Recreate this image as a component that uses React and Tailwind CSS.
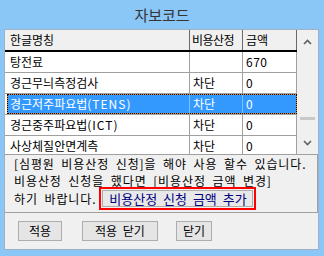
const rows = [
  { name: "탕전료", flag: "", amount: "670" },
  { name: "경근무늬측정검사", flag: "차단", amount: "0" },
  { name: "경근저주파요법(TENS)", flag: "차단", amount: "0", selected: true },
  { name: "경근중주파요법(ICT)", flag: "차단", amount: "0" },
  { name: "사상체질안면계측", flag: "차단", amount: "0" },
];

function Chevron({ down }) {
  return (
    <svg width="9" height="6" viewBox="0 0 9 6" className="block">
      <path
        d={down ? "M1 1 L4.5 4.5 L8 1" : "M1 5 L4.5 1.5 L8 5"}
        fill="none"
        stroke="#606060"
        strokeWidth="1.6"
      />
    </svg>
  );
}

function Name({ text }) {
  // latin part is wider in the original font
  const m = text.match(/^(.*?)(\(.*\))?$/);
  return (
    <>
      {m[1]}
      {m[2] && <span className="tracking-[1px]">{m[2]}</span>}
    </>
  );
}

export default function App() {
  return (
    <div className="w-[324px] h-[256px] overflow-hidden bg-[#8ac6f6] font-['Noto_Sans_CJK_KR',sans-serif] text-black">
      {/* Title */}
      <div className="h-[29px] flex items-center justify-center text-[15px] text-[#343434] pt-px">
        자보코드
      </div>

      <div className="ml-[4px] w-[315px] h-[221px] border border-[#9fb2c4] bg-[#f0f0f0] flex flex-col">
        {/* Grid */}
        <div className="h-[125px] flex bg-white overflow-hidden border-b border-[#a0a0a0]">
          <div className="w-[292px] flex flex-col text-[12px] leading-none">
            {/* Header */}
            <div className="h-[22px] flex shrink-0 bg-[#f0f0f0] border-b-2 border-black">
              <div className="w-[185px] pl-[5px] flex items-center border-r border-[#6a6a6a]">한글명칭</div>
              <div className="w-[53px] pl-[2px] flex items-center border-r border-[#6a6a6a] tracking-[-0.5px]">비용산정</div>
              <div className="w-[54px] pl-[3px] flex items-center border-r border-[#6a6a6a]">금액</div>
            </div>
            {rows.map((r) =>
              r.selected ? (
                <div
                  key={r.name}
                  className="h-[21px] shrink-0 flex pl-[2px] border-b border-[#a0a0a0]"
                >
                  <div className="flex-1 flex bg-[#3399ff] text-white border border-[#e8922e] outline outline-1 outline-dotted outline-black -outline-offset-1">
                    <div className="w-[182px] pl-[2px] flex items-center border-r border-[#80bfff]">
                      <Name text={r.name} />
                    </div>
                    <div className="w-[53px] pl-[3px] flex items-center border-r border-[#80bfff]">{r.flag}</div>
                    <div className="flex-1 pl-[3px] flex items-center">{r.amount}</div>
                  </div>
                </div>
              ) : (
                <div key={r.name} className="h-[21px] shrink-0 flex border-b border-[#a0a0a0]">
                  <div className="w-[185px] pl-[5px] flex items-center border-r border-[#a0a0a0]">
                    <Name text={r.name} />
                  </div>
                  <div className="w-[53px] pl-[3px] flex items-center border-r border-[#a0a0a0]">{r.flag}</div>
                  <div className="w-[54px] pl-[3px] flex items-center border-r border-[#a0a0a0] tracking-[0.5px]">{r.amount}</div>
                </div>
              )
            )}
          </div>
          {/* Scrollbar */}
          <div className="flex-1 bg-[#f0f0f0] flex flex-col items-center">
            <div className="h-[22px] flex items-center justify-center pt-[2px]">
              <Chevron />
            </div>
            <div className="flex-1 w-full flex flex-col justify-end items-center pb-[20px]">
              <div className="w-[15px] h-[3px] bg-[#c8c8c8]" />
            </div>
            <div className="h-[14px] flex items-start justify-center">
              <Chevron down />
            </div>
          </div>
        </div>

        {/* Message */}
        <div className="h-[58px] shrink-0 border-b border-r border-[#a0a0a0] pl-[9px] text-[12px] leading-[17px] tracking-[0.9px] [word-spacing:3px]">
          <div>[심평원 비용산정 신청]을 해야 사용 할수 있습니다.</div>
          <div>비용산정 신청을 했다면 [비용산정 금액 변경]</div>
          <div className="flex items-center h-[24px] -mt-[3px]">
            <span>하기 바랍니다.</span>
            <div className="ml-[3px] w-[157px] h-[23px] border-2 border-[#ff0000] p-px">
              <button className="w-full h-full border border-[#acacac] bg-[#e8e8e8] text-[#000080] text-[13px] leading-none tracking-normal [word-spacing:3px]">
                비용산정 신청 금액 추가
              </button>
            </div>
          </div>
        </div>

        {/* Buttons */}
        <div className="flex items-start pt-[8px] pl-[13px] text-[12px] leading-none">
          <button className="w-[44px] h-[20px] border border-[#adadad] bg-[#e5e5e5]">적용</button>
          <button className="ml-[20px] w-[76px] h-[20px] border border-[#adadad] bg-[#e5e5e5] [word-spacing:3px]">적용 닫기</button>
          <button className="ml-[18px] w-[36px] h-[20px] border border-[#adadad] bg-[#e5e5e5]">닫기</button>
        </div>
      </div>
    </div>
  );
}
